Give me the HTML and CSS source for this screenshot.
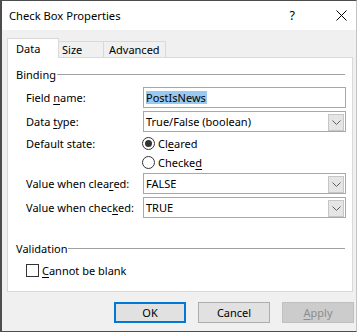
FILE: index.html
```html
<!DOCTYPE html>
<html>
<head>
<meta charset="utf-8">
<title>Check Box Properties</title>
<link rel="stylesheet" href="styles.css">
</head>
<body>
<div class="window">
  <div class="titlebar">
    <span class="title">Check Box Properties</span>
    <span class="help">?</span>
    <span class="close"><svg width="11" height="11" viewBox="0 0 11 11"><path d="M0.5 0.5L10.5 10.5M10.5 0.5L0.5 10.5" stroke="#000" stroke-width="1" fill="none"/></svg></span>
  </div>
  <div class="client">
    <div class="tabs">
      <div class="tab active">Data</div>
      <div class="tab">Size</div>
      <div class="tab">Advanced</div>
    </div>
    <div class="panel">
      <div class="legend"><span>Binding</span><i class="rule"></i></div>
      <div class="form">
        <div class="lbl r1">Field <u>n</u>ame:</div>
        <div class="edit r1"><span class="sel">PostIsNews</span></div>
        <div class="lbl r2">Data <u>t</u>ype:</div>
        <div class="combo r2"><span class="val">True/False (boolean)</span><span class="drop"><svg width="9" height="5" viewBox="0 0 9 5"><path d="M0.5 0.5L4.5 4.5L8.5 0.5" stroke="#606060" stroke-width="1" fill="none"/></svg></span></div>
        <div class="lbl r3">Default state:</div>
        <div class="radio r3"><span class="dot on"></span><span>Cl<u>e</u>ared</span></div>
        <div class="lbl r4"></div>
        <div class="radio r4"><span class="dot"></span><span>Checke<u>d</u></span></div>
        <div class="lbl r5">Value when clea<u>r</u>ed:</div>
        <div class="combo r5"><span class="val">FALSE</span><span class="drop"><svg width="9" height="5" viewBox="0 0 9 5"><path d="M0.5 0.5L4.5 4.5L8.5 0.5" stroke="#606060" stroke-width="1" fill="none"/></svg></span></div>
        <div class="lbl r6">Value when chec<u>k</u>ed:</div>
        <div class="combo r6"><span class="val">TRUE</span><span class="drop"><svg width="9" height="5" viewBox="0 0 9 5"><path d="M0.5 0.5L4.5 4.5L8.5 0.5" stroke="#606060" stroke-width="1" fill="none"/></svg></span></div>
      </div>
      <div class="legend validation"><span>Validation</span><i class="rule"></i></div>
      <div class="check"><span class="box"></span><span><u>C</u>annot be blank</span></div>
    </div>
    <div class="buttons">
      <div class="btn default">OK</div>
      <div class="btn">Cancel</div>
      <div class="btn disabled"><u>A</u>pply</div>
    </div>
  </div>
</div>
</body>
</html>
```

FILE: styles.css
```css
* { box-sizing: border-box; }
html, body { margin: 0; padding: 0; background: #ffffff; }
body {
  font-family: "Noto Sans", "Open Sans", sans-serif;
  font-size: 11px;
  color: #000;
}
u { text-decoration: underline; text-underline-offset: 2px; }

.window {
  width: 357px;
  height: 332px;
  border-top: 1px solid #4d4d4d;
  border-left: 2px solid #4d4d4d;
  border-bottom: 1px solid #4d4d4d;
  border-right: 1px solid #c4c4c4;
  display: flex;
  flex-direction: column;
}

.titlebar {
  height: 29px;
  background: #ffffff;
  display: flex;
  align-items: center;
  padding-left: 7px;
  padding-bottom: 1px;
}
.title { flex: 1; font-size: 11.2px; }
.help { font-size: 12.5px; margin-right: 41px; }
.close { display: flex; margin-right: 9px; }

.client {
  flex: 1;
  background: #f0f0f0;
  padding: 8px 0 0 5px;
}

.tabs {
  display: flex;
  align-items: flex-end;
  height: 19px;
  padding-left: 1px;
}
.tab {
  height: 16px;
  line-height: 15px;
  border: 1px solid #d9d9d9;
  border-bottom: none;
  background: #f0f0f0;
  padding-left: 5px;
  margin-left: -1px;
}
.tab:nth-child(2) { width: 48px; }
.tab:nth-child(3) { width: 63px; }
.tab.active {
  height: 20px;
  line-height: 19px;
  width: 52px;
  margin-left: -1px;
  margin-right: -2px;
  margin-bottom: -1px;
  padding-left: 8px;
  background: #ffffff;
  position: relative;
  z-index: 1;
}

.panel {
  width: 346px;
  height: 235px;
  background: #ffffff;
  border: 1px solid #d9d9d9;
  padding: 9px 0 0 8px;
}

.legend {
  display: flex;
  align-items: center;
  width: 329px;
  height: 16px;
  line-height: 16px;
}
.legend .rule {
  flex: 1;
  height: 1px;
  background: #a0a0a0;
  margin-left: 1px;
  margin-top: -1px;
}
.validation { margin-top: 23px; }

.form {
  display: grid;
  grid-template-columns: 117px 203px;
  grid-template-rows: 24px 23px 19px 20px 24px 21px;
  margin: 4px 0 0 10px;
  align-items: start;
}
.lbl { height: 21px; line-height: 21px; white-space: nowrap; }
.r3.lbl, .r4.lbl { height: 19px; line-height: 19px; }

.edit, .combo {
  height: 21px;
  border: 1px solid #a8a8a8;
  background: #fff;
  display: flex;
  align-items: center;
  padding-left: 2px;
}
.sel {
  background: #99c9ef;
  line-height: 13px;
  height: 13px;
  display: inline-block;
  padding-right: 1px;
}
.combo .val { flex: 1; }
.drop {
  width: 16px;
  height: 17px;
  margin-right: 1px;
  margin-top: 1px;
  background: #e5e5e5;
  border: 1px solid #c6c6c6;
  display: flex;
  align-items: center;
  justify-content: center;
}

.radio {
  height: 19px;
  display: flex;
  align-items: center;
  margin-left: -1px;
}
.dot {
  width: 13px;
  height: 13px;
  border: 1px solid #333;
  border-radius: 50%;
  margin-right: 3px;
  display: flex;
  align-items: center;
  justify-content: center;
}
.dot.on::after {
  content: "";
  width: 7px;
  height: 7px;
  border-radius: 50%;
  background: #333;
}

.check {
  display: flex;
  align-items: center;
  height: 16px;
  margin: 5px 0 0 10px;
}
.box {
  width: 13px;
  height: 13px;
  border: 1px solid #333;
  background: #fff;
  margin-right: 3px;
}

.buttons {
  width: 347px;
  display: flex;
  justify-content: flex-end;
  gap: 12px;
  margin-top: 10px;
}
.btn {
  width: 72px;
  height: 21px;
  line-height: 19px;
  text-align: center;
  background: #e1e1e1;
  border: 1px solid #adadad;
}
.btn.default { border: 2px solid #0078d7; line-height: 17px; }
.btn.disabled { background: #cccccc; border-color: #bfbfbf; color: #8d8d8d; }
```
